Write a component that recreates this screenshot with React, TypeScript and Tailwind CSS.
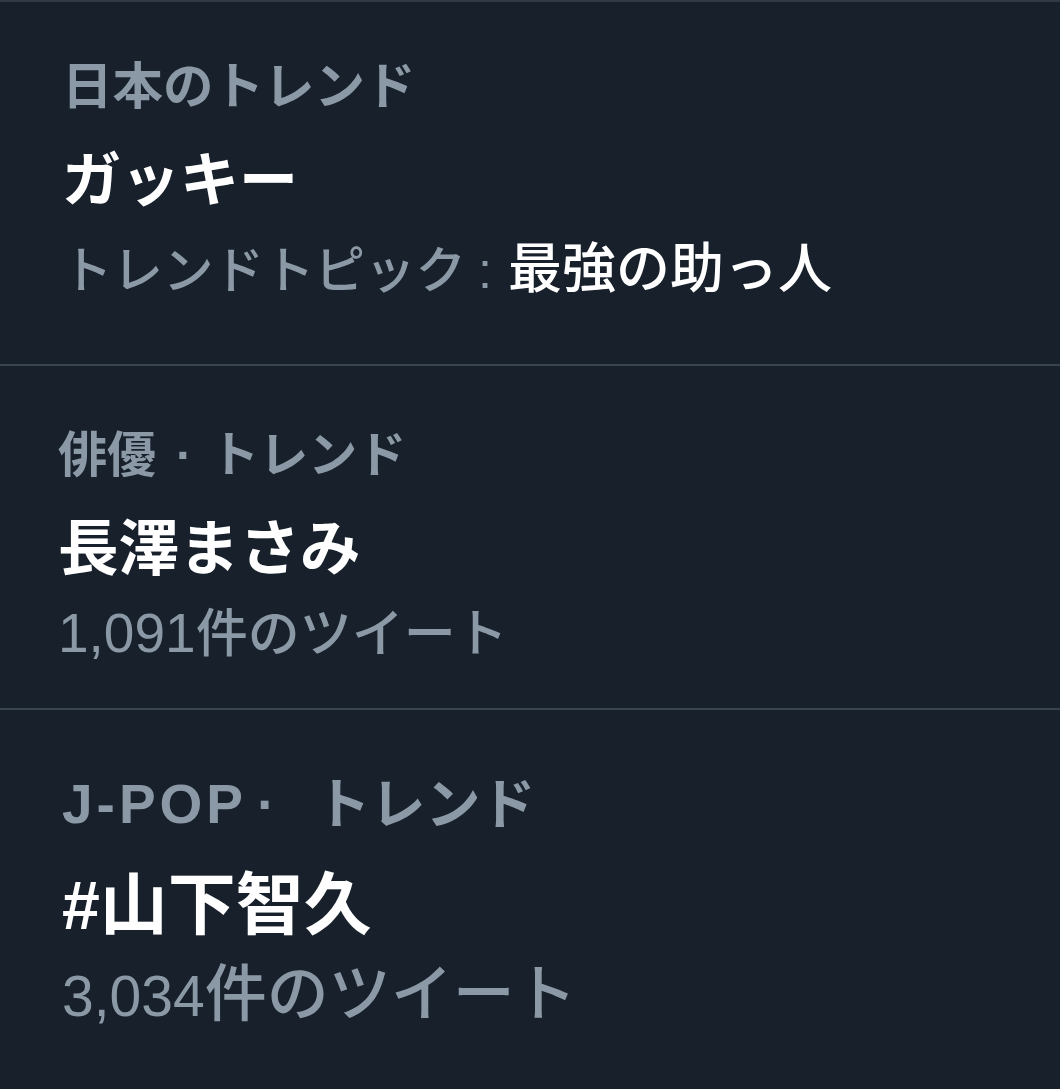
import React from "react";

const font = { fontFamily: '"Liberation Sans", "Noto Sans CJK JP", sans-serif' };

export default function App() {
  return (
    <div className="w-[1060px] h-[1089px] bg-[#17202b] overflow-hidden" style={font}>
      <div className="border-t-2 border-[#2f3a46]" />
      {/* Row 1 */}
      <div className="h-[364px] border-b-2 border-[#38444f] pl-[62px] pt-[56px]">
        <div className="text-[50.5px] leading-[58px] font-bold text-[#8b98a5] whitespace-nowrap">日本のトレンド</div>
        <div className="mt-[34px] text-[59px] leading-[62px] font-bold text-white whitespace-nowrap">ガッキー</div>
        <div className="mt-[26px] text-[50.5px] leading-[62px] font-medium text-[#8b98a5] whitespace-nowrap">
          トレンドトピック<span className="ml-[12px] mr-[16px]">:</span>
          <span className="text-white font-medium text-[54px]">最強の助っ人</span>
        </div>
      </div>
      {/* Row 2 */}
      <div className="h-[344px] border-b-2 border-[#38444f] pl-[58px] pt-[60px]">
        <div className="text-[49px] leading-[58px] font-bold text-[#8b98a5] whitespace-nowrap">
          俳優<span className="ml-[20px] mr-[18px]">·</span>トレンド
        </div>
        <div className="mt-[34px] text-[60.5px] leading-[62px] font-bold text-white whitespace-nowrap">長澤まさみ</div>
        <div className="mt-[22px] text-[52px] leading-[62px] font-medium text-[#8b98a5] whitespace-nowrap">
          <span className="text-[55px]">1,091</span>件のツイート
        </div>
      </div>
      {/* Row 3 */}
      <div className="pl-[62px] pt-[64px]">
        <div className="text-[55px] leading-[60px] font-bold text-[#8b98a5] whitespace-nowrap">
          <span className="tracking-[4px]">J-POP</span>
          <span className="ml-[10px] mr-[40px]">·</span>トレンド
        </div>
        <div className="mt-[38px] text-[68px] leading-[66px] font-bold text-white whitespace-nowrap">#山下智久</div>
        <div className="mt-[24px] text-[62px] leading-[66px] font-medium text-[#8b98a5] whitespace-nowrap">
          <span className="text-[57px]">3,034</span>件のツイート
        </div>
      </div>
    </div>
  );
}
